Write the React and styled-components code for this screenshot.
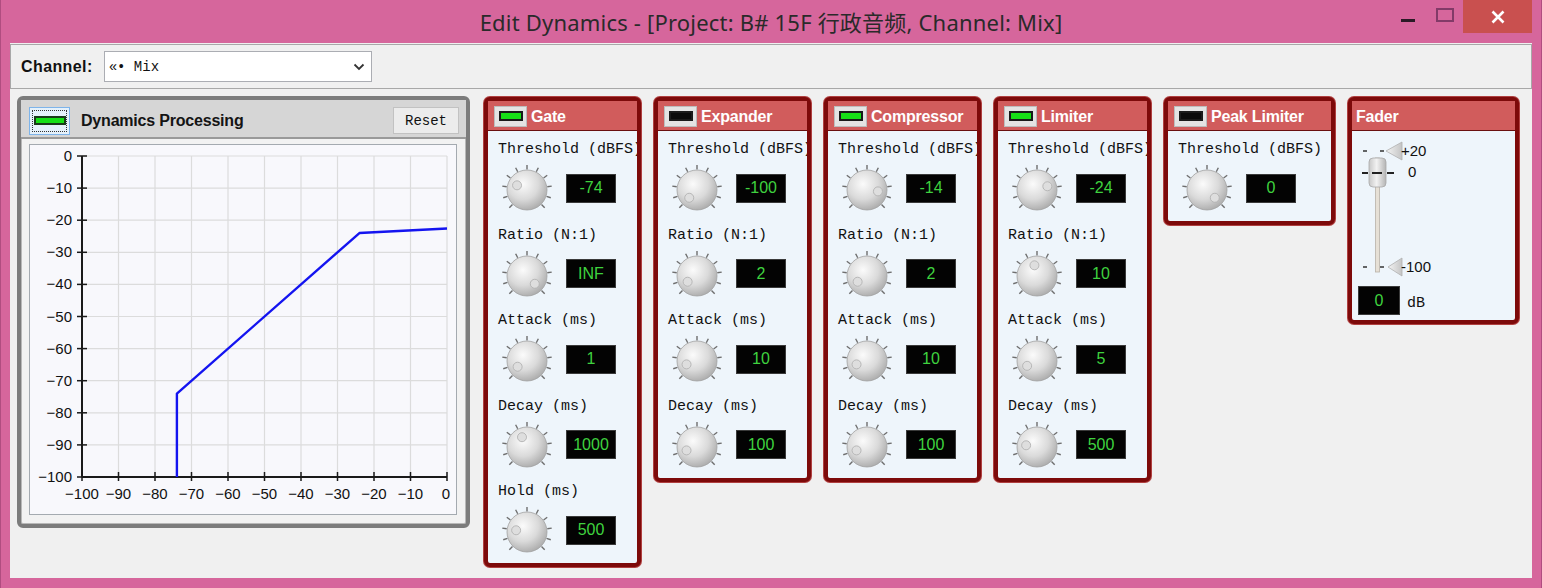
import React from 'react'
import styled, { createGlobalStyle } from 'styled-components'

const GlobalStyle = createGlobalStyle`
  html, body { margin: 0; padding: 0; background: #d6669c; }
  * { box-sizing: border-box; }
`;

const MONO = `"Liberation Mono", "DejaVu Sans Mono", monospace`;
const SANS = `"Liberation Sans", Arial, sans-serif`;

const modules = [
    {
        name: 'Gate', on: true, rows: [
            { label: 'Threshold (dBFS)', value: '-74', pos: 0.26 },
            { label: 'Ratio (N:1)', value: 'INF', pos: 1 },
            { label: 'Attack (ms)', value: '1', pos: 0.05 },
            { label: 'Decay (ms)', value: '1000', pos: 0.4 },
            { label: 'Hold (ms)', value: '500', pos: 0.2 },
        ]
    },
    {
        name: 'Expander', on: false, rows: [
            { label: 'Threshold (dBFS)', value: '-100', pos: 0 },
            { label: 'Ratio (N:1)', value: '2', pos: 0.05 },
            { label: 'Attack (ms)', value: '10', pos: 0.1 },
            { label: 'Decay (ms)', value: '100', pos: 0.1 },
        ]
    },
    {
        name: 'Compressor', on: true, rows: [
            { label: 'Threshold (dBFS)', value: '-14', pos: 0.86 },
            { label: 'Ratio (N:1)', value: '2', pos: 0.05 },
            { label: 'Attack (ms)', value: '10', pos: 0.1 },
            { label: 'Decay (ms)', value: '100', pos: 0.1 },
        ]
    },
    {
        name: 'Limiter', on: true, rows: [
            { label: 'Threshold (dBFS)', value: '-24', pos: 0.76 },
            { label: 'Ratio (N:1)', value: '10', pos: 0.45 },
            { label: 'Attack (ms)', value: '5', pos: 0.07 },
            { label: 'Decay (ms)', value: '500', pos: 0.2 },
        ]
    },
]

function Knob({ pos }) {
    const cx = 26, cy = 26, r = 20;
    const ticks = [];
    for (let i = 0; i < 11; i++) {
        const a = (-135 + i * 27) * Math.PI / 180;
        ticks.push(
            <line key={i}
                x1={cx + (r + 0.5) * Math.sin(a)} y1={cy - (r + 0.5) * Math.cos(a)}
                x2={cx + (r + 5) * Math.sin(a)} y2={cy - (r + 5) * Math.cos(a)}
                stroke="#6e6e6e" strokeWidth="1.4" />
        )
    }
    const a = (-135 + pos * 270) * Math.PI / 180;
    const ix = cx + 11 * Math.sin(a), iy = cy - 11 * Math.cos(a);
    return (
        <svg width="52" height="52" viewBox="0 0 52 52">
            <defs>
                <radialGradient id="knobGrad" cx="40%" cy="35%" r="70%">
                    <stop offset="0%" stopColor="#fbfbfb" />
                    <stop offset="55%" stopColor="#dadada" />
                    <stop offset="100%" stopColor="#a9a9a9" />
                </radialGradient>
            </defs>
            {ticks}
            <circle cx={cx} cy={cy} r={r} fill="url(#knobGrad)" stroke="#a2a2a2" strokeWidth="0.8" />
            <circle cx={ix} cy={iy} r="4.5" fill="#dedede" stroke="#b2b2b2" strokeWidth="0.9" />
        </svg>
    )
}

function Led({ on }) {
    return <LedButton><LedBar on={on ? 1 : 0} /></LedButton>
}

function Module({ name, on, rows, wide }) {
    return (
        <ModulePanel wide={wide ? 1 : 0}>
            <ModuleHeader>
                <Led on={on} />
                <span>{name}</span>
            </ModuleHeader>
            <ModuleBody>
                {rows.map((row) => (
                    <ParamRow key={row.label}>
                        <ParamLabel>{row.label}</ParamLabel>
                        <KnobRow>
                            <Knob pos={row.pos} />
                            <ValueBox>{row.value}</ValueBox>
                        </KnobRow>
                    </ParamRow>
                ))}
            </ModuleBody>
        </ModulePanel>
    )
}

function Chart() {
    const px = (v) => 52 + (v + 100) * 3.65;
    const py = (v) => 11 + (-v) * 3.21;
    const steps = [0, -10, -20, -30, -40, -50, -60, -70, -80, -90, -100];
    const curve = [[-74, -100], [-74, -74], [-24, -24], [0, -22.6]]
        .map(([x, y]) => `${px(x)},${py(y)}`).join(' ');
    return (
        <svg width="426" height="369" viewBox="0 0 426 369">
            {steps.filter((v) => v > -100).map((v) => (
                <line key={'gx' + v} x1={px(v)} y1={py(0)} x2={px(v)} y2={py(-100)} stroke="#dcdcdc" strokeWidth="1.2" />
            ))}
            {steps.filter((v) => v > -100).map((v) => (
                <line key={'gy' + v} x1={px(-100)} y1={py(v)} x2={px(0)} y2={py(v)} stroke="#dcdcdc" strokeWidth="1.2" />
            ))}
            <line x1={px(-100)} y1={py(0)} x2={px(-100)} y2={py(-100)} stroke="#1a1a1a" strokeWidth="2" />
            <line x1={px(-100)} y1={py(-100)} x2={px(0)} y2={py(-100)} stroke="#1a1a1a" strokeWidth="2" />
            {steps.map((v) => (
                <line key={'ty' + v} x1={px(-100) - 5} y1={py(v)} x2={px(-100) + 5} y2={py(v)} stroke="#1a1a1a" strokeWidth="1.5" />
            ))}
            {steps.map((v) => (
                <line key={'tx' + v} x1={px(v)} y1={py(-100) - 5} x2={px(v)} y2={py(-100) + 4} stroke="#1a1a1a" strokeWidth="1.5" />
            ))}
            {steps.map((v) => (
                <AxisText key={'ly' + v} x={42} y={py(v) + 5} textAnchor="end">{v === 0 ? '0' : '−' + (-v)}</AxisText>
            ))}
            {steps.map((v) => (
                <AxisText key={'lx' + v} x={v === 0 ? px(v) - 1 : px(v)} y={354} textAnchor="middle">{v === 0 ? '0' : '−' + (-v)}</AxisText>
            ))}
            <polyline points={curve} fill="none" stroke="#1414f0" strokeWidth="2.4" strokeLinejoin="round" />
        </svg>
    )
}

function FaderGraphic() {
    return (
        <svg width="100" height="146" viewBox="0 0 100 146">
            <defs>
                <linearGradient id="thumbGrad" x1="0" x2="1" y1="0" y2="0">
                    <stop offset="0%" stopColor="#c8c8c8" />
                    <stop offset="45%" stopColor="#f2f2f2" />
                    <stop offset="100%" stopColor="#b4b4b4" />
                </linearGradient>
                <linearGradient id="triGrad" x1="0" x2="1" y1="0" y2="0">
                    <stop offset="0%" stopColor="#f4f4f4" />
                    <stop offset="100%" stopColor="#c4c4c4" />
                </linearGradient>
            </defs>
            <rect x="23.5" y="22" width="4" height="114" fill="#e6e0d6" stroke="#b8b2a8" strokeWidth="0.8" />
            <line x1="11" y1="15" x2="15" y2="15" stroke="#333" strokeWidth="1.5" />
            <line x1="28" y1="15" x2="32" y2="15" stroke="#333" strokeWidth="1.5" />
            <polygon points="34,15 50,6 50,24" fill="url(#triGrad)" stroke="#b0b0b0" strokeWidth="0.8" />
            <line x1="11" y1="131" x2="15" y2="131" stroke="#333" strokeWidth="1.5" />
            <line x1="28" y1="131" x2="32" y2="131" stroke="#333" strokeWidth="1.5" />
            <polygon points="36,131 50,122 50,140" fill="url(#triGrad)" stroke="#b0b0b0" strokeWidth="0.8" />
            <rect x="17" y="22" width="17" height="29" rx="4" fill="url(#thumbGrad)" stroke="#a8a8a8" strokeWidth="0.8" />
            <line x1="10" y1="37" x2="16" y2="37" stroke="#222" strokeWidth="2" />
            <line x1="20" y1="37" x2="30" y2="37" stroke="#222" strokeWidth="2" />
            <line x1="35" y1="37" x2="42" y2="37" stroke="#222" strokeWidth="2" />
            <FaderText x={49} y={20}>+20</FaderText>
            <FaderText x={56} y={41}>0</FaderText>
            <FaderText x={49} y={136}>-100</FaderText>
        </svg>
    )
}

function App() {
    return (
        <>
            <GlobalStyle />
            <Window>
                <TitleBar>
                    <span />
                    <Title>Edit Dynamics - [Project: B# 15F 行政音频, Channel: Mix]</Title>
                    <Controls>
                        <CtrlButton><MinGlyph /></CtrlButton>
                        <CtrlButton><MaxGlyph /></CtrlButton>
                        <CloseButton>
                            <svg width="14" height="14" viewBox="0 0 14 14">
                                <path d="M1.5 1.5 L12.5 12.5 M12.5 1.5 L1.5 12.5" stroke="#fff" strokeWidth="2.6" />
                            </svg>
                        </CloseButton>
                    </Controls>
                </TitleBar>
                <Client>
                    <ChannelBar>
                        <ChannelLabel>Channel:</ChannelLabel>
                        <Select>
                            <span>«• Mix</span>
                            <svg width="12" height="8" viewBox="0 0 12 8">
                                <path d="M1.5 1.5 L6 6 L10.5 1.5" fill="none" stroke="#333" strokeWidth="1.8" />
                            </svg>
                        </Select>
                    </ChannelBar>
                    <Workspace>
                        <DynPanel>
                            <DynHeader>
                                <DynLed><DynLedBar /></DynLed>
                                <DynTitle>Dynamics Processing</DynTitle>
                                <ResetButton>Reset</ResetButton>
                            </DynHeader>
                            <DynBody>
                                <ChartBox><Chart /></ChartBox>
                            </DynBody>
                        </DynPanel>
                        {modules.map((m) => <Module key={m.name} {...m} />)}
                        <Module name="Peak Limiter" on={false} wide
                            rows={[{ label: 'Threshold (dBFS)', value: '0', pos: 1 }]} />
                        <ModulePanel wide={1}>
                            <ModuleHeader plain={1}><span>Fader</span></ModuleHeader>
                            <FaderBody>
                                <FaderGraphic />
                                <FaderValueRow>
                                    <ValueBox small={1}>0</ValueBox>
                                    <DbLabel>dB</DbLabel>
                                </FaderValueRow>
                            </FaderBody>
                        </ModulePanel>
                    </Workspace>
                </Client>
            </Window>
        </>
    )
}

export default App

const Window = styled.div`
    width: 1542px;
    height: 588px;
    background: #d6669c;
    border-left: 1px solid #b04d80;
    border-right: 1px solid #b04d80;
    display: flex;
    flex-direction: column;
    padding: 0 9px 10px 9px;
`;
const TitleBar = styled.div`
    height: 43px;
    display: grid;
    grid-template-columns: 1fr auto 1fr;
    align-items: start;
`;
const Title = styled.div`
    font-family: "Noto Sans", "Noto Sans CJK SC", sans-serif;
    font-size: 22px;
    color: #2a2a2a;
    line-height: 45px;
    letter-spacing: 0.2px;
`;
const Controls = styled.div`
    justify-self: end;
    display: flex;
    align-items: flex-start;
`;
const CtrlButton = styled.div`
    width: 37px;
    height: 33px;
    display: flex;
    align-items: center;
    justify-content: center;
`;
const MinGlyph = styled.div`
    width: 14px;
    height: 3px;
    background: #2b1a26;
    margin-top: 8px;
`;
const MaxGlyph = styled.div`
    width: 18px;
    height: 14px;
    border: 2px solid #833a68;
    margin-top: -4px;
`;
const CloseButton = styled.div`
    width: 69px;
    height: 33px;
    background: #c9504f;
    display: flex;
    align-items: center;
    justify-content: center;
`;
const Client = styled.div`
    flex: 1;
    background: #f0f0f0;
    display: flex;
    flex-direction: column;
`;
const ChannelBar = styled.div`
    height: 45px;
    margin-top: 1px;
    border: 1px solid #a8a8a8;
    display: flex;
    align-items: center;
    padding: 0 0 0 10px;
    gap: 11px;
`;
const ChannelLabel = styled.div`
    font-family: ${SANS};
    font-weight: bold;
    font-size: 16px;
    color: #111;
    letter-spacing: 0.4px;
`;
const Select = styled.div`
    width: 268px;
    height: 31px;
    background: #fff;
    border: 1px solid #abadb3;
    display: flex;
    align-items: center;
    justify-content: space-between;
    padding: 0 6px 0 4px;
    font-family: ${MONO};
    font-size: 14px;
    color: #111;
`;
const Workspace = styled.div`
    display: flex;
    align-items: flex-start;
    gap: 13px;
    padding: 7px 0 0 7px;
`;
const DynPanel = styled.div`
    width: 453px;
    height: 432px;
    margin-right: 1px;
    border: 4px solid #7c7c7c;
    border-radius: 6px;
    background: #f2f2f2;
    display: flex;
    flex-direction: column;
    box-shadow: inset 0 0 0 1px #b8b8b8;
`;
const DynHeader = styled.div`
    height: 39px;
    background: #d6d6d6;
    border-bottom: 2px solid #9a9a9a;
    display: flex;
    align-items: center;
    padding: 0 7px 0 8px;
`;
const DynLed = styled.div`
    width: 41px;
    height: 28px;
    margin-top: 4px;
    border: 1px solid #7eb4ea;
    background: #e5f1fb;
    display: flex;
    align-items: center;
    justify-content: center;
    outline: 1px dotted #333;
    outline-offset: -4px;
`;
const DynLedBar = styled.div`
    width: 32px;
    height: 9px;
    background: #16e016;
    border: 2px solid #1a3a1a;
`;
const DynTitle = styled.div`
    flex: 1;
    font-family: ${SANS};
    font-weight: bold;
    font-size: 16px;
    color: #141414;
    margin: 4px 0 0 11px;
    letter-spacing: -0.2px;
`;
const ResetButton = styled.div`
    width: 66px;
    height: 27px;
    margin-top: 4px;
    background: #ececec;
    border: 1px solid #c2c2c2;
    display: flex;
    align-items: center;
    justify-content: center;
    font-family: ${MONO};
    font-size: 14px;
    color: #111;
`;
const DynBody = styled.div`
    flex: 1;
    padding: 5px 8px 5px 8px;
`;
const ChartBox = styled.div`
    width: 428px;
    height: 371px;
    border: 1px solid #a4aab0;
    background: #f8f8fc;
`;
const AxisText = styled.text`
    font-family: ${SANS};
    font-size: 15px;
    fill: #111;
`;
const ModulePanel = styled.div`
    width: ${(p) => (p.wide ? '171px' : '157px')};
    margin-top: 1px;
    border: 4px solid #7d0a0a;
    border-radius: 6px;
    background: #eef5fb;
    padding-bottom: 1px;
    box-shadow: 0 0 0 1px #b04040;
`;
const ModuleHeader = styled.div`
    height: 30px;
    background: #d15c5c;
    border-bottom: 1px solid #6a1010;
    display: flex;
    align-items: center;
    gap: 4px;
    padding-top: 3px;
    padding-left: ${(p) => (p.plain ? '4px' : '6px')};
    font-family: ${SANS};
    font-weight: bold;
    font-size: 16px;
    color: #fff;
    letter-spacing: -0.2px;
    white-space: nowrap;
    overflow: hidden;
`;
const LedButton = styled.div`
    width: 33px;
    height: 21px;
    margin-top: -2px;
    background: #e4e4e4;
    border: 1px solid #bdbdbd;
    display: flex;
    align-items: center;
    justify-content: center;
`;
const LedBar = styled.div`
    width: 24px;
    height: 10px;
    background: ${(p) => (p.on ? '#16e016' : '#0a0a0a')};
    border: 2px solid #1a1a1a;
`;
const ModuleBody = styled.div`
    padding-top: 9px;
    display: flex;
    flex-direction: column;
    gap: 5.5px;
`;
const ParamRow = styled.div`
    display: flex;
    flex-direction: column;
`;
const ParamLabel = styled.div`
    height: 20px;
    line-height: 20px;
    padding-left: 10px;
    font-family: ${MONO};
    font-size: 15px;
    color: #111;
    white-space: nowrap;
    overflow: hidden;
`;
const KnobRow = styled.div`
    height: 60px;
    display: flex;
    align-items: center;
    gap: 13px;
    padding-left: 13px;
`;
const ValueBox = styled.div`
    width: ${(p) => (p.small ? '42px' : '50px')};
    height: 29px;
    background: #030303;
    border: 1px solid #3a3a3a;
    display: flex;
    align-items: center;
    justify-content: center;
    font-family: ${SANS};
    font-size: 16px;
    color: #3fd23f;
    margin-top: -4px;
`;
const FaderBody = styled.div`
    padding: 5px 0 4px 0;
    display: flex;
    flex-direction: column;
`;
const FaderText = styled.text`
    font-family: ${SANS};
    font-size: 15px;
    fill: #111;
`;
const FaderValueRow = styled.div`
    display: flex;
    align-items: center;
    gap: 7px;
    padding-left: 6px;
    margin-top: 8px;
`;
const DbLabel = styled.div`
    font-family: ${MONO};
    font-size: 15px;
    color: #111;
    margin-top: 2px;
`;
